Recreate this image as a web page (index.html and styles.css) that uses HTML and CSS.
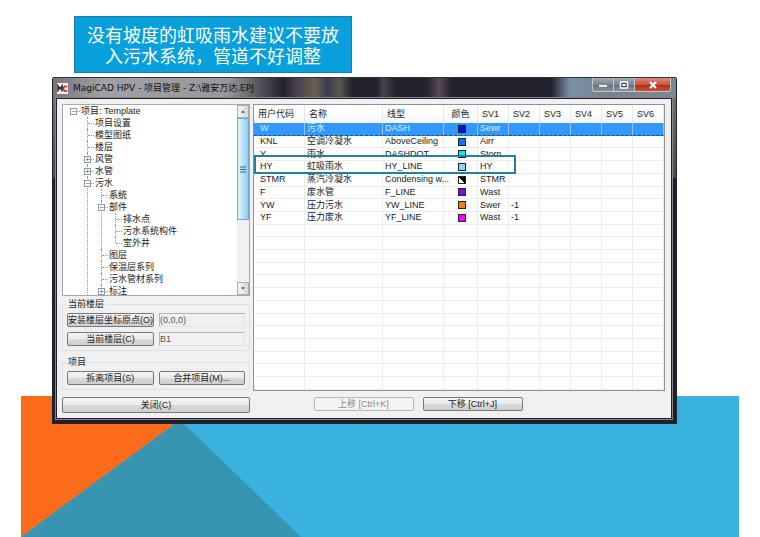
FILE: index.html
```html
<!DOCTYPE html>
<html lang="zh-CN">
<head>
    <meta charset="UTF-8">
    <meta name="viewport" content="width=device-width, initial-scale=1.0">
    <title>MagiCAD HPV - 项目管理</title>
    <link rel="stylesheet" href="styles.css">
</head>
<body>
    <div class="slide">
        <svg class="backdrop" viewBox="0 0 718 141" preserveAspectRatio="none" aria-hidden="true">
            <rect width="718" height="141" fill="#39b2e0"/>
            <polygon points="0,0 159,0 159,24 0,141" fill="#fb6b1a"/>
            <polygon points="0,141 159,24 280,141" fill="#3895b2"/>
        </svg>

        <div class="content">
            <p class="callout">没有坡度的虹吸雨水建议不要放<br>入污水系统，管道不好调整</p>

            <div class="window">
                <div class="title-bar">
                    <svg class="app-icon" viewBox="0 0 11 11" aria-hidden="true">
                        <rect width="11" height="11" fill="#f4f0f0"/>
                        <path d="M1 8.500V3L3 6L5 3V8.500" fill="none" stroke="#222" stroke-width="1.500"/>
                        <path d="M10 4Q8 2.500 6.800 4.200Q6 6 7 7.500Q8.400 8.800 10 7.400" fill="none" stroke="#d8222a" stroke-width="1.600"/>
                    </svg>
                    <span class="title">MagiCAD HPV - 项目管理 - Z:\雅安万达.EPJ</span>
                    <div class="window-buttons">
                        <button class="win-btn" aria-label="最小化">
                            <svg viewBox="0 0 10 8"><rect x="1" y="4" width="8" height="2" fill="#e8edf1"/></svg>
                        </button>
                        <button class="win-btn" aria-label="最大化">
                            <svg viewBox="0 0 10 8"><rect x="1.500" y="1" width="7" height="6" fill="#444" stroke="#fff" stroke-width="1.500"/><rect x="3.500" y="3" width="3" height="2" fill="#fff"/></svg>
                        </button>
                        <button class="win-btn close" aria-label="关闭窗口">
                            <svg viewBox="0 0 10 8"><path d="M2 1L8 7M8 1L2 7" stroke="#fff" stroke-width="2.200"/></svg>
                        </button>
                    </div>
                </div>

                <div class="client">
                    <div class="side">
                        <div class="tree-box">
                            <ul class="tree">
                                <li class="root"><button class="toggle" aria-label="折叠">−</button>项目: Template
                                    <ul>
                                        <li>项目设置</li>
                                        <li>模型图纸</li>
                                        <li>楼层</li>
                                        <li><button class="toggle" aria-label="展开">+</button>风管</li>
                                        <li><button class="toggle" aria-label="展开">+</button>水管</li>
                                        <li><button class="toggle" aria-label="折叠">−</button>污水
                                            <ul>
                                                <li><span class="current">系统</span></li>
                                                <li><button class="toggle" aria-label="折叠">−</button>部件
                                                    <ul>
                                                        <li>排水点</li>
                                                        <li>污水系统构件</li>
                                                        <li class="last">室外井</li>
                                                    </ul>
                                                </li>
                                                <li>图层</li>
                                                <li>保温层系列</li>
                                                <li>污水管材系列</li>
                                                <li><button class="toggle" aria-label="展开">+</button>标注</li>
                                            </ul>
                                        </li>
                                    </ul>
                                </li>
                            </ul>
                            <div class="scrollbar">
                                <button class="arrow" aria-label="向上滚动"><svg viewBox="0 0 6 4"><path d="M0 4L3 0L6 4Z" fill="#555"/></svg></button>
                                <div class="thumb"><svg viewBox="0 0 6 7"><path d="M0 1H6M0 3.500H6M0 6H6" stroke="#2b6c8c"/></svg></div>
                                <button class="arrow down" aria-label="向下滚动"><svg viewBox="0 0 6 4"><path d="M0 0L3 4L6 0Z" fill="#555"/></svg></button>
                            </div>
                        </div>

                        <fieldset class="group">
                            <legend>当前楼层</legend>
                            <button class="btn" id="origin-btn">安装楼层坐标原点(O)</button>
                            <input class="field" type="text" value="(0,0,0)" aria-labelledby="origin-btn" readonly>
                            <button class="btn" id="floor-btn">当前楼层(C)</button>
                            <input class="field" type="text" value="B1" aria-labelledby="floor-btn" readonly>
                        </fieldset>

                        <fieldset class="group">
                            <legend>项目</legend>
                            <button class="btn">拆离项目(S)</button>
                            <button class="btn">合并项目(M)...</button>
                        </fieldset>

                        <button class="btn btn-close">关闭(C)</button>
                    </div>

                    <div class="main">
                        <div class="list-box">
                            <table class="systems">
                                <colgroup>
                                    <col class="col-code">
                                    <col class="col-name">
                                    <col class="col-line">
                                    <col class="col-color">
                                    <col class="col-sv" span="6">
                                </colgroup>
                                <thead>
                                    <tr>
                                        <th>用户代码</th><th>名称</th><th>线型</th><th class="center">颜色</th>
                                        <th>SV1</th><th>SV2</th><th>SV3</th><th>SV4</th><th>SV5</th><th>SV6</th>
                                    </tr>
                                </thead>
                                <tbody>
                                    <tr class="selected"><td>W</td><td>污水</td><td>DASH</td><td><span class="swatch blue"></span></td><td>Sewr</td><td></td><td></td><td></td><td></td><td></td></tr>
                                    <tr><td>KNL</td><td>空调冷凝水</td><td>AboveCeiling</td><td><span class="swatch azure"></span></td><td>Airr</td><td></td><td></td><td></td><td></td><td></td></tr>
                                    <tr><td>Y</td><td>雨水</td><td>DASHDOT</td><td><span class="swatch cyan"></span></td><td>Storn</td><td></td><td></td><td></td><td></td><td></td></tr>
                                    <tr><td>HY</td><td>虹吸雨水</td><td>HY_LINE</td><td><span class="swatch sky"></span></td><td>HY</td><td></td><td></td><td></td><td></td><td></td></tr>
                                    <tr><td>STMR</td><td>蒸汽冷凝水</td><td>Condensing w...</td><td><span class="swatch mono"></span></td><td>STMR</td><td></td><td></td><td></td><td></td><td></td></tr>
                                    <tr><td>F</td><td>废水管</td><td>F_LINE</td><td><span class="swatch violet"></span></td><td>Wast</td><td></td><td></td><td></td><td></td><td></td></tr>
                                    <tr><td>YW</td><td>压力污水</td><td>YW_LINE</td><td><span class="swatch orange"></span></td><td>Swer</td><td>-1</td><td></td><td></td><td></td><td></td></tr>
                                    <tr><td>YF</td><td>压力废水</td><td>YF_LINE</td><td><span class="swatch magenta"></span></td><td>Wast</td><td>-1</td><td></td><td></td><td></td><td></td></tr>
                                    <tr><td></td><td></td><td></td><td></td><td></td><td></td><td></td><td></td><td></td><td></td></tr>
                                    <tr><td></td><td></td><td></td><td></td><td></td><td></td><td></td><td></td><td></td><td></td></tr>
                                    <tr><td></td><td></td><td></td><td></td><td></td><td></td><td></td><td></td><td></td><td></td></tr>
                                    <tr><td></td><td></td><td></td><td></td><td></td><td></td><td></td><td></td><td></td><td></td></tr>
                                    <tr><td></td><td></td><td></td><td></td><td></td><td></td><td></td><td></td><td></td><td></td></tr>
                                    <tr><td></td><td></td><td></td><td></td><td></td><td></td><td></td><td></td><td></td><td></td></tr>
                                    <tr><td></td><td></td><td></td><td></td><td></td><td></td><td></td><td></td><td></td><td></td></tr>
                                    <tr><td></td><td></td><td></td><td></td><td></td><td></td><td></td><td></td><td></td><td></td></tr>
                                    <tr><td></td><td></td><td></td><td></td><td></td><td></td><td></td><td></td><td></td><td></td></tr>
                                    <tr><td></td><td></td><td></td><td></td><td></td><td></td><td></td><td></td><td></td><td></td></tr>
                                    <tr><td></td><td></td><td></td><td></td><td></td><td></td><td></td><td></td><td></td><td></td></tr>
                                    <tr><td></td><td></td><td></td><td></td><td></td><td></td><td></td><td></td><td></td><td></td></tr>
                                    <tr><td></td><td></td><td></td><td></td><td></td><td></td><td></td><td></td><td></td><td></td></tr>
                                </tbody>
                            </table>
                            <div class="marker"></div>
                        </div>
                        <div class="actions">
                            <button class="btn" disabled>上移 [Ctrl+K]</button>
                            <button class="btn">下移 [Ctrl+J]</button>
                        </div>
                    </div>
                </div>
            </div>
        </div>
    </div>
</body>
</html>
```
FILE: styles.css
```css
* {
    box-sizing: border-box;
}

body {
    margin: 0;
    background: #fff;
    color: #222;
    font-family: "Liberation Sans", "Noto Sans CJK SC", sans-serif;
    font-size: 9px;
    line-height: 12px;
}

button,
input {
    font: inherit;
    color: inherit;
    margin: 0;
    padding: 0;
}

/* slide */
.slide {
    display: grid;
    min-height: 100vh;
}

.backdrop,
.content {
    grid-area: 1 / 1;
}

.backdrop {
    align-self: end;
    width: calc(100% - 42px);
    height: 141px;
    margin: 0 21px;
}

.content {
    padding: 16px 83px 0 52px;
}

.callout {
    width: fit-content;
    margin: 0 0 4px 22px;
    padding: 9px 12px 4px;
    border: 1px solid #1c7ba0;
    background: #08a0dc;
    color: #fff;
    font-family: "Liberation Sans", "Noto Sans CJK SC", sans-serif;
    font-size: 18px;
    line-height: 21px;
    text-align: center;
}

/* window frame */
.window {
    padding: 0 6px 6px 5px;
    border-radius: 3px 3px 0 0;
    background: linear-gradient(#77777d 0, #4a4a50 100px, #20202c 102px, #20202c 100%);
    box-shadow: inset 0 0 0 1px #22222a;
}

.title-bar {
    display: flex;
    align-items: center;
    height: 22px;
    margin: 0 -5px 0 -4px;
    background: linear-gradient(90deg, #75757b 0, #a0a0a5 8%, #97979c 28%, #55555c 33%, #22222e 37%, #453e50 39%, #6a6052 42%, #3d3a52 44%, #55584a 46%, #22222e 48%, #22222e 52%, #4b404e 53%, #22222e 55%, #22222e 60%, #5a4a58 62%, #22222e 64%, #22222e 80%, #7992a6 83%, #77828c 88%, #7d8790 100%);
    border-top: 1px solid #33333b;
    border-bottom: 1px solid #66666c;
}

.app-icon {
    width: 11px;
    height: 11px;
    margin: 0 5px 0 4px;
}

.title {
    flex: 1;
    color: #111;
    font-family: "DejaVu Sans", "Noto Sans CJK SC", sans-serif;
    white-space: nowrap;
}

.window-buttons {
    display: flex;
    align-self: flex-start;
    margin-right: 5px;
    border: 1px solid #c0c8ce;
    border-top: 0;
    border-radius: 0 0 3px 3px;
    overflow: hidden;
}

.win-btn {
    display: flex;
    align-items: center;
    justify-content: center;
    width: 21px;
    height: 13px;
    border: 0;
    border-right: 1px solid #c0c8ce;
    background: linear-gradient(#a3abb2, #7c868e 50%, #656f78 51%, #87939d);
}

.win-btn svg {
    width: 10px;
    height: 8px;
}

.win-btn.close {
    width: 35px;
    border-right: 0;
    background: linear-gradient(#d98b7c, #c45542 50%, #b02a16 51%, #cc5136);
}

/* client area */
.client {
    display: grid;
    grid-template-columns: 188fr 412fr;
    gap: 3px;
    padding: 5px 6px 5px 5px;
    background: #f0f0f0;
    box-shadow: 0 0 0 1px #20202c, 0 0 0 2px #85858d;
}

.side,
.main {
    display: flex;
    flex-direction: column;
    min-width: 0;
}

.tree-box {
    display: flex;
    height: 192px;
    border: 1px solid #a5a9b0;
    background: #fff;
    overflow: hidden;
}

.tree {
    flex: 1;
    margin: 0;
    padding: 0 0 0 6px;
    list-style: none;
    white-space: nowrap;
}

.tree ul {
    margin: 0 0 0 2px;
    padding: 0;
    list-style: none;
}

.tree li {
    position: relative;
    padding-left: 12px;
}

.tree ul li::before {
    content: "";
    position: absolute;
    left: 4px;
    top: 0;
    bottom: 0;
    border-left: 1px dotted #999;
}

.tree ul li.last::before {
    bottom: 6px;
}

.tree li::after {
    content: "";
    position: absolute;
    left: 5px;
    top: 6px;
    width: 6px;
    border-top: 1px dotted #999;
}

.toggle {
    position: absolute;
    left: 1px;
    top: 3px;
    z-index: 1;
    width: 7px;
    height: 7px;
    border: 1px solid #8f99a5;
    background: #fff;
    color: #223a6a;
    font-size: 7px;
    line-height: 5px;
}

.current {
    background: #f0f0f0;
}

.scrollbar {
    display: flex;
    flex-direction: column;
    width: 12px;
    background: #f0f0f0;
}

.arrow {
    display: flex;
    align-items: center;
    justify-content: center;
    height: 13px;
    border: 1px solid #a9adb3;
    background: linear-gradient(90deg, #f5f5f5, #d6d8da);
}

.arrow svg {
    width: 4px;
    height: 3px;
}

.arrow.down {
    margin-top: auto;
}

.thumb {
    display: flex;
    align-items: center;
    justify-content: center;
    height: 102px;
    border: 1px solid #6fa9c8;
    background: linear-gradient(90deg, #dff3fc, #b9e2f6 50%, #8fcbea);
}

.thumb svg {
    width: 6px;
    height: 7px;
}

.group {
    display: grid;
    grid-template-columns: 1fr 1fr;
    gap: 5px;
    min-width: 0;
    margin: 2px 0 0;
    padding: 3px 4px 4px;
    border: 1px solid #dbe2e6;
    border-radius: 3px;
}

.group + .group {
    margin-top: 5px;
}

.group legend {
    padding: 0 1px;
}

.btn {
    height: 14px;
    border: 1px solid #777;
    border-radius: 2px;
    background: linear-gradient(#f4f4f4, #ebebeb 50%, #dadada 51%, #cfcfcf);
    line-height: 12px;
    white-space: nowrap;
}

.btn:disabled {
    border-color: #b5b8ba;
    background: #f4f4f4;
    color: #8a8a8a;
}

.field {
    width: 100%;
    min-width: 0;
    height: 14px;
    border: 1px solid #e2e2e2;
    border-top-color: #b2b5ba;
    border-left-color: #b2b5ba;
    background: #f0f0f0;
    color: #555;
}

.btn-close {
    height: 16px;
    margin-top: 7px;
}

/* system list */
.list-box {
    position: relative;
    flex: 1;
    border: 1px solid #8c9097;
    background: #fff;
}

.systems {
    width: 100%;
    height: 100%;
    table-layout: fixed;
    border-collapse: separate;
    border-spacing: 0;
}

.col-code {
    width: 51px;
}

.col-name {
    width: 78px;
}

.col-line {
    width: 61px;
}

.col-color {
    width: 34px;
}

.col-sv {
    width: 31px;
}

.systems th {
    height: 18px;
    padding: 0 0 0 4px;
    border-right: 1px solid #e6e8ea;
    background: linear-gradient(#fff 50%, #f3f4f6);
    font-weight: normal;
    text-align: left;
}

.systems th.center {
    padding: 0;
    text-align: center;
}

.systems td {
    height: 12px;
    padding: 0 0 0 2px;
    border-right: 1px solid #ececec;
    border-bottom: 1px solid #ececec;
    line-height: 11px;
    white-space: nowrap;
}

.systems td:first-child {
    padding-left: 6px;
}

.systems .selected td {
    border-right-color: #8fc4fa;
    border-bottom: 1px dashed #1b4f87;
    background: #3298fd;
    color: #d9ecff;
}

.swatch {
    display: block;
    width: 8px;
    height: 8px;
    margin: 0 auto;
    border: 1px solid #222;
}

.blue {
    background: #0a0af0;
}

.azure {
    background: #0a7af0;
}

.cyan {
    background: #14e6f0;
}

.sky {
    background: #7fd6f5;
}

.mono {
    background: linear-gradient(45deg, #fff 45%, #000 46%);
}

.violet {
    background: #7a0af0;
}

.orange {
    background: #f57f0a;
}

.magenta {
    background: #f00af0;
}

/* frame drawn over the HY row */
.marker {
    position: absolute;
    left: 0;
    top: 50px;
    width: 64%;
    height: 19px;
    border: 2px solid #1f82a2;
}

.actions {
    display: flex;
    justify-content: center;
    align-items: flex-start;
    gap: 9px;
    height: 16px;
    margin: 6px 82px 0 0;
}

.actions .btn {
    width: 100px;
}
```
